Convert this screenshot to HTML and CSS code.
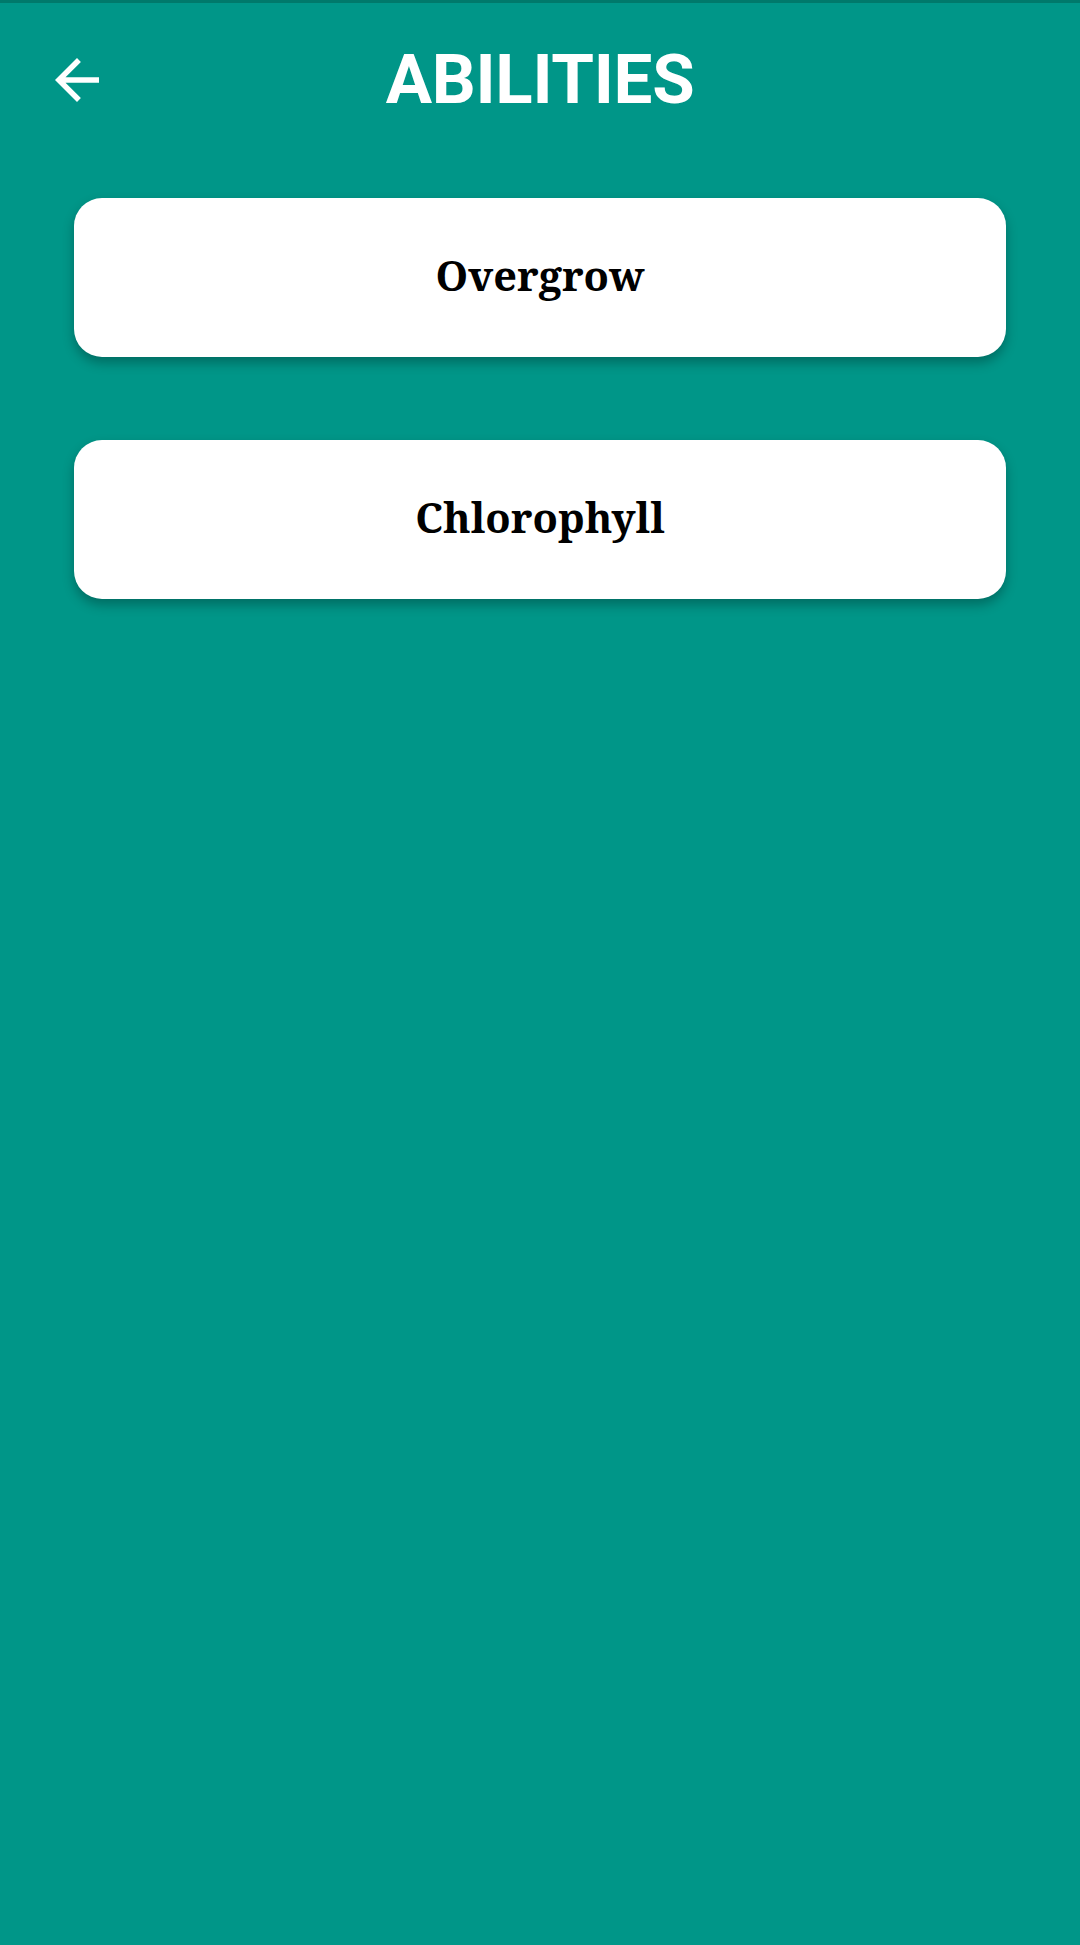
FILE: index.html
```html
<!DOCTYPE html>
<html lang="en">
<head>
<meta charset="utf-8">
<title>Abilities</title>
<link rel="stylesheet" href="styles.css">
</head>
<body>
<div class="status-strip"></div>
<header class="app-bar">
  <div class="app-bar__left">
    <svg class="back-icon" viewBox="0 0 24 24" aria-hidden="true">
      <path d="M20 11H7.83l5.59-5.59L12 4l-8 8 8 8 1.41-1.41L7.83 13H20v-2z" fill="#ffffff"/>
    </svg>
  </div>
  <h1 class="app-bar__title">ABILITIES</h1>
  <div class="app-bar__right"></div>
</header>
<main class="ability-list">
  <div class="ability-card"><span class="ability-card__name">Overgrow</span></div>
  <div class="ability-card"><span class="ability-card__name">Chlorophyll</span></div>
</main>
</body>
</html>
```
FILE: styles.css
```css
html, body {
  margin: 0;
  padding: 0;
}
body {
  background: #009688;
  width: 1080px;
  min-height: 1945px;
  font-family: Roboto, "Noto Sans", sans-serif;
}
.status-strip {
  height: 3px;
  background: #00796b;
}
.app-bar {
  display: grid;
  grid-template-columns: 1fr auto 1fr;
  align-items: center;
  height: 152px;
}
.app-bar__left {
  display: flex;
  align-items: center;
  padding-left: 44px;
}
.back-icon {
  display: block;
  width: 66px;
  height: 66px;
  margin-top: 2px;
}
.app-bar__title {
  margin: 0;
  color: #ffffff;
  font-family: Roboto, "Noto Sans", sans-serif;
  font-weight: 700;
  font-size: 69px;
  line-height: 1;
  letter-spacing: -0.3px;
}
.ability-list {
  display: flex;
  flex-direction: column;
  gap: 83px;
  padding: 43px 74px 0;
}
.ability-card {
  box-sizing: border-box;
  height: 159px;
  padding-bottom: 5px;
  background: #ffffff;
  border-radius: 28px;
  box-shadow: 0 6px 12px rgba(0, 0, 0, 0.28);
  display: flex;
  align-items: center;
  justify-content: center;
}
.ability-card__name {
  font-family: "Noto Serif", "DejaVu Serif", "Liberation Serif", serif;
  font-weight: 700;
  font-size: 41.5px;
  color: #000000;
}
```
